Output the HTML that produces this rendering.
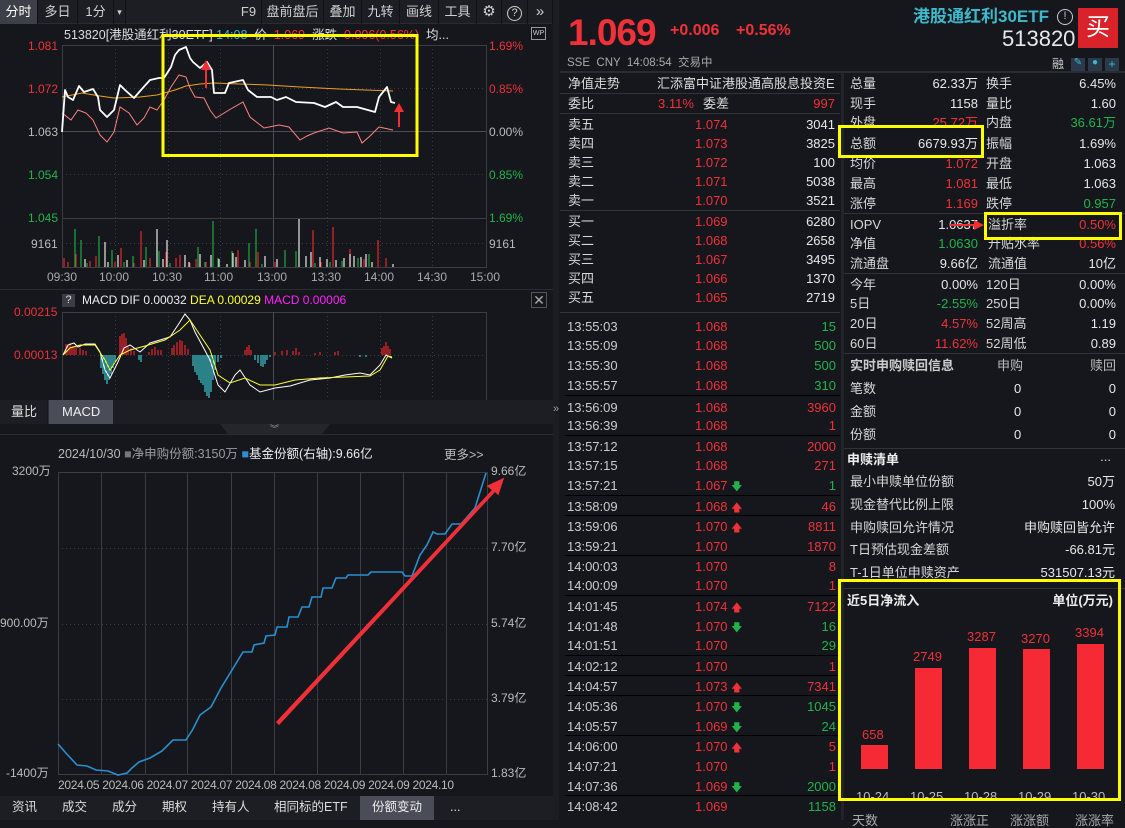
<!DOCTYPE html>
<html><head><meta charset="utf-8"><style>
*{margin:0;padding:0;box-sizing:border-box}
body{width:1125px;height:820px;background:#15171c;overflow:hidden;position:relative;font-family:"Liberation Sans","Noto Sans CJK SC",sans-serif;font-size:13px;color:#d8d8d8}
.a{position:absolute;white-space:nowrap;line-height:1}
.r{color:#f0313a}.g{color:#22b24c}.w{color:#e8e8e8}.c{color:#3cb9cc}.gy{color:#9a9ca2}
.hl{position:absolute;height:1px;background:#30333a}
.vl{position:absolute;width:1px;background:#30333a}
.tb{position:absolute;top:0;height:24px;line-height:24px;font-size:13px;color:#d0d0d0;text-align:center;border-right:1px solid #101114}
.yb{position:absolute;border:3px solid #ffff00}
</style></head><body>
<div style="position:absolute;left:0;top:0;width:553px;height:24px;background:#1c1e23;border-bottom:1px solid #2a2c32"></div>
<div class="tb" style="left:0;width:38px;background:#3d4048;color:#fff">分时</div>
<div class="tb" style="left:38px;width:40px">多日</div>
<div class="tb" style="left:78px;width:36px">1分</div>
<div class="tb" style="left:114px;width:12px;font-size:9px">▾</div>
<div class="tb" style="left:236px;width:26px">F9</div>
<div class="tb" style="left:262px;width:62px">盘前盘后</div>
<div class="tb" style="left:324px;width:38px">叠加</div>
<div class="tb" style="left:362px;width:38px">九转</div>
<div class="tb" style="left:400px;width:39px">画线</div>
<div class="tb" style="left:439px;width:38px">工具</div>
<div class="tb" style="left:477px;width:25px;font-size:15px">⚙</div>
<div class="tb" style="left:502px;width:26px"><span style="display:inline-block;width:15px;height:15px;border:1.5px solid #ccc;border-radius:50%;line-height:12px;font-size:11px">?</span></div>
<div class="tb" style="left:528px;width:25px;font-size:15px">»</div>
<div class="vl" style="left:553px;top:0;height:820px;width:6px;background:#1b1d22"></div>
<div class="a gy" style="left:553px;top:404px;font-size:11px">»</div>

<div class="a" style="left:64px;top:29px;font-size:12.5px;color:#ddd">513820[港股通红利30ETF] <span class="c">14:08</span> &nbsp;价 &nbsp;<span class="r">1.069</span> &nbsp;涨跌 &nbsp;<span class="r">0.006(0.56%)</span> &nbsp;均...</div>
<div class="a" style="left:531px;top:27px;width:15px;height:13px;border:1px solid #999;font-size:7px;color:#ccc;text-align:center;line-height:11px">WP</div>
<div class="a r" style="left:28px;top:40px;font-size:12px">1.081</div>
<div class="a r" style="left:28px;top:83px;font-size:12px">1.072</div>
<div class="a" style="left:28px;top:126px;font-size:12px;color:#bbb">1.063</div>
<div class="a g" style="left:28px;top:169px;font-size:12px">1.054</div>
<div class="a g" style="left:28px;top:212px;font-size:12px">1.045</div>
<div class="a" style="left:31px;top:238px;font-size:12px;color:#bbb">9161</div>
<div class="a r" style="left:489px;top:40px;font-size:12px">1.69%</div>
<div class="a r" style="left:489px;top:83px;font-size:12px">0.85%</div>
<div class="a" style="left:489px;top:126px;font-size:12px;color:#bbb">0.00%</div>
<div class="a g" style="left:489px;top:169px;font-size:12px">0.85%</div>
<div class="a g" style="left:489px;top:212px;font-size:12px">1.69%</div>
<div class="a" style="left:489px;top:238px;font-size:12px;color:#bbb">9161</div>
<div class="a" style="left:47px;top:271px;font-size:12px;color:#aaa">09:30</div>
<div class="a" style="left:99px;top:271px;font-size:12px;color:#aaa">10:00</div>
<div class="a" style="left:152px;top:271px;font-size:12px;color:#aaa">10:30</div>
<div class="a" style="left:204px;top:271px;font-size:12px;color:#aaa">11:00</div>
<div class="a" style="left:257px;top:271px;font-size:12px;color:#aaa">13:00</div>
<div class="a" style="left:311px;top:271px;font-size:12px;color:#aaa">13:30</div>
<div class="a" style="left:364px;top:271px;font-size:12px;color:#aaa">14:00</div>
<div class="a" style="left:417px;top:271px;font-size:12px;color:#aaa">14:30</div>
<div class="a" style="left:470px;top:271px;font-size:12px;color:#aaa">15:00</div>

<svg class="a" style="left:0;top:0" width="553" height="820">
<g stroke="#3a3d44" stroke-width="1" fill="none">
<rect x="62.5" y="45.5" width="424" height="222"/>
<line x1="62" y1="131.5" x2="486" y2="131.5" stroke="#4a4d55"/>
<line x1="273.5" y1="45" x2="273.5" y2="267" stroke="#4a4d55"/>
<g stroke-dasharray="1 3"><line x1="62" y1="88.5" x2="486" y2="88.5"/><line x1="62" y1="174.5" x2="486" y2="174.5"/><line x1="62" y1="243.5" x2="486" y2="243.5"/>
<line x1="115.5" y1="45" x2="115.5" y2="267"/><line x1="168.5" y1="45" x2="168.5" y2="267"/><line x1="220.5" y1="45" x2="220.5" y2="267"/><line x1="327.5" y1="45" x2="327.5" y2="267"/><line x1="380.5" y1="45" x2="380.5" y2="267"/><line x1="432.5" y1="45" x2="432.5" y2="267"/></g>
<line x1="62" y1="218.5" x2="486" y2="218.5"/>
</g>
<path d="M64 267V258M68 267V262M76 267V254M90 267V261M96 267V256M115 267V262M121 267V248M134 267V263M141 267V231M150 267V258M166 267V252M176 267V258M180 267V255M190 267V263M196 267V259M206 267V262M238 267V250M250 267V262M258 267V252M275 267V262M313 267V230M321 267V262M333 267V227M350 267V249M364 267V259M378 267V240M386 267V258" stroke="#e8262c" stroke-width="1.2"/>
<path d="M75 267V229M81 267V240M87 267V263M99 267V236M112 267V250M124 267V262M133 267V256M146 267V247M159 267V251M170 267V263M198 267V247M205 267V262M213 267V221M218 267V258M232 267V251M249 267V243M256 267V229M262 267V264M285 267V250M296 267V251M315 267V263M330 267V262M342 267V261M358 267V258M369 267V254" stroke="#1fa83f" stroke-width="1.2"/>
<path d="M85 267V259M105 267V242M108 267V262M118 267V255M127 267V260M144 267V260M157 267V229M163 267V259M167 267V240M185 267V255M189 267V262M200 267V254M211 267V255M219 267V259M227 267V264M233 267V253M236 267V257M245 267V260M265 267V256M277 267V259M299 267V219M306 267V256M311 267V252M320 267V257M327 267V259M336 267V260M344 267V258M350 267V254M354 267V256M361 267V257M366 267V254M372 267V262M393 267V264" stroke="#e8e8e8" stroke-width="1.2"/>
<polyline fill="none" stroke="#ff8080" stroke-width="1" points="62,113 71,120 78,110 86,113 93,120 100,135 107,142 114,132 120,107 129,113 137,125 144,118 150,107 157,110 164,100 171,87 179,75 186,77 190,88 195,97 204,98 210,110 216,118 229,110 243,102 250,117 264,128 279,125 289,127 300,140 307,136 314,133 329,128 343,133 357,132 362,143 370,136 379,127 393,130"/>
<polyline fill="none" stroke="#f0a020" stroke-width="1" points="62,97 82,93 100,96 114,98 140,97 157,95 175,90 186,86 200,84 214,83 240,84 268,85 300,87 339,89 393,91"/>
<polyline fill="none" stroke="#ffffff" stroke-width="1.8" stroke-linejoin="round" points="62,132 65,90 68,97 73,100 79,86 84,92 93,89 98,97 100,110 107,117 114,110 120,85 125,90 134,98 141,90 150,80 159,78 164,78 171,67 175,55 179,50 186,47 190,58 193,62 200,68 207,62 212,70 214,93 225,93 229,83 243,80 248,90 257,97 271,97 277,100 286,97 296,102 314,103 325,107 336,102 343,107 357,107 375,112 379,97 387,87 391,102 395,103"/>
<path d="M205 88L205 70L201 70L206 60L211 70L207 70L207 88Z" fill="#f03030"/>
<path d="M398 127L398 112L394 112L399 103L404 112L400 112L400 127Z" fill="#f03030"/>
<rect x="163" y="35.5" width="254" height="120" fill="none" stroke="#ffff00" stroke-width="3"/>
<line x1="0" y1="289.5" x2="553" y2="289.5" stroke="#2a2c33"/>
<g stroke="#3a3d44" fill="none"><rect x="62.5" y="312.5" width="424" height="90"/>
<line x1="273.5" y1="312" x2="273.5" y2="400" stroke="#4a4d55"/>
<g stroke-dasharray="1 3"><line x1="62" y1="355.5" x2="486" y2="355.5"/><line x1="115.5" y1="312" x2="115.5" y2="400"/><line x1="168.5" y1="312" x2="168.5" y2="400"/><line x1="220.5" y1="312" x2="220.5" y2="400"/><line x1="327.5" y1="312" x2="327.5" y2="400"/><line x1="380.5" y1="312" x2="380.5" y2="400"/><line x1="432.5" y1="312" x2="432.5" y2="400"/></g></g>
<path d="M66 355V344M68 355V345M70 355V343M72 355V346M74 355V347M76 355V346M80 355V348M83 355V350M86 355V351M120 355V336M122 355V334M124 355V333M126 355V338M128 355V346M131 355V348M134 355V351M149 355V352M152 355V349M155 355V347M158 355V350M161 355V350M172 355V348M174 355V345M177 355V342M180 355V340M182 355V341M185 355V345M188 355V349M245 355V350M247 355V347M249 355V345M251 355V350M275 355V352M282 355V351M287 355V350M293 355V351M296 355V348M299 355V352M315 355V353M320 355V352M335 355V352M338 355V351M382 355V348M384 355V346M386 355V342M388 355V346M390 355V349" stroke="#e8262c" stroke-width="1.2"/>
<path d="M101 355V368M103 355V374M105 355V380M107 355V384M109 355V380M111 355V374M113 355V368M115 355V362M139 355V360M141 355V362M193 355V366M195 355V372M197 355V375M199 355V380M201 355V383M203 355V385M205 355V392M207 355V396M209 355V398M211 355V392M213 355V380M215 355V370M218 355V362M221 355V358M255 355V360M258 355V363M261 355V366M263 355V367M265 355V364M267 355V360M270 355V357M360 355V357M366 355V357" stroke="#3cc8d0" stroke-width="1.2"/>
<polyline fill="none" stroke="#ffffff" stroke-width="1" points="63,355 68,345 74,343 78,347 85,344 95,344 100,352 105,370 110,378 118,362 124,348 130,345 140,352 150,343 160,340 170,337 178,325 185,314 190,320 195,332 202,345 210,360 218,385 225,392 235,375 240,370 250,385 260,392 275,388 290,386 310,380 330,378 345,375 360,373 370,375 380,365 386,355 392,358"/>
<polyline fill="none" stroke="#ffff30" stroke-width="1" points="63,355 70,348 80,345 95,345 105,360 110,370 120,355 130,350 145,346 165,340 180,330 190,320 200,335 210,350 218,375 230,383 245,378 260,385 275,385 295,380 320,378 345,377 370,376 380,370 388,356 392,357"/>
<rect x="0" y="400" width="553" height="24" fill="#1c1e23"/>
<rect x="48" y="400" width="65" height="24" fill="#4a4d57"/>
<line x1="48" y1="400" x2="48" y2="424" stroke="#101114"/>
<path d="M220 424H330L322 434H228Z" fill="#24262c"/>
<line x1="0" y1="434.5" x2="553" y2="434.5" stroke="#2a2c33"/>
<g stroke="#3a3d44" fill="none"><rect x="58.5" y="472.5" width="429" height="302"/>
<path d="M101.5 472V774M145.5 472V774M187.5 472V774M231.5 472V774M274.5 472V774M317.5 472V774M360.5 472V774M403.5 472V774M446.5 472V774"/>
<g stroke-dasharray="1 3"><line x1="58" y1="548.5" x2="487" y2="548.5"/><line x1="58" y1="624.5" x2="487" y2="624.5"/><line x1="58" y1="699.5" x2="487" y2="699.5"/></g></g>
<polyline fill="none" stroke="#2a8fd0" stroke-width="1.6" points="58,744 65,752 77,765 87,766 96,770 108,771 118,775 127,773 132,768 139,762 150,758 162,751 173,740 186,740 193,729 200,715 211,707 221,688 243,652 252,652 254,645 264,643 266,636 275,635 277,627 287,627 289,617 298,617 302,607 309,607 312,597 321,597 323,588 332,588 336,578 346,578 348,575 368,575 371,572 402,572 405,576 412,576 420,555 427,545 433,532 437,534 445,534 452,524 461,524 475,508 486,473"/>
<path d="M277 722L493 490L488 486L503 479L498 494L495 491L279 724Z" fill="#f03038" stroke="#f03038" stroke-width="1.5"/>
<rect x="0" y="796" width="553" height="24" fill="#1c1e23"/>
<rect x="360" y="796" width="74" height="24" fill="#4a4d57"/>
</svg>
<div class="a" style="left:62px;top:294px;width:13px;height:13px;background:#3a3d44;color:#ddd;font-size:11px;text-align:center;line-height:13px">?</div>
<div class="a" style="left:82px;top:294px;font-size:12px;color:#eee">MACD DIF 0.00032 <span style="color:#ffff30">DEA 0.00029</span> <span style="color:#ff20ff">MACD 0.00006</span></div>
<div class="a" style="left:531px;top:292px;width:16px;height:16px;border:1px solid #555;color:#aaa;font-size:14px;text-align:center;line-height:14px">✕</div>
<div class="a r" style="left:14px;top:306px;font-size:12px">0.00215</div>
<div class="a r" style="left:14px;top:349px;font-size:12px">0.00013</div>
<div class="a" style="left:11px;top:405px;font-size:13px;color:#ddd">量比</div>
<div class="a" style="left:62px;top:405px;font-size:13px;color:#eee">MACD</div>
<div class="a gy" style="left:270px;top:425px;font-size:9px">︾</div>
<div class="a" style="left:58px;top:448px;font-size:12.5px;color:#bbb">2024/10/30 <span style="color:#777">■</span><span class="gy">净申购份额:3150万</span> <span style="color:#2a8fd0">■</span><span style="color:#eee">基金份额(右轴):9.66亿</span></div>
<div class="a" style="left:444px;top:449px;font-size:12.5px;color:#bbb">更多&gt;&gt;</div>
<div class="a" style="left:12px;top:465px;font-size:12px;color:#bbb">3200万</div>
<div class="a" style="left:0;top:617px;font-size:12px;color:#bbb">900.00万</div>
<div class="a" style="left:6px;top:767px;font-size:12px;color:#bbb">-1400万</div>
<div class="a" style="left:491px;top:465px;font-size:12px;color:#bbb">9.66亿</div>
<div class="a" style="left:491px;top:541px;font-size:12px;color:#bbb">7.70亿</div>
<div class="a" style="left:491px;top:617px;font-size:12px;color:#bbb">5.74亿</div>
<div class="a" style="left:491px;top:692px;font-size:12px;color:#bbb">3.79亿</div>
<div class="a" style="left:491px;top:767px;font-size:12px;color:#bbb">1.83亿</div>
<div class="a" style="left:58px;top:779px;font-size:12px;color:#bbb;letter-spacing:-0.3px">2024.05 2024.06 2024.07 2024.07 2024.08 2024.08 2024.09 2024.09 2024.10</div>
<div class="a" style="left:12px;top:801px;font-size:12.5px;color:#ddd">资讯</div>
<div class="a" style="left:62px;top:801px;font-size:12.5px;color:#ddd">成交</div>
<div class="a" style="left:112px;top:801px;font-size:12.5px;color:#ddd">成分</div>
<div class="a" style="left:162px;top:801px;font-size:12.5px;color:#ddd">期权</div>
<div class="a" style="left:212px;top:801px;font-size:12.5px;color:#ddd">持有人</div>
<div class="a" style="left:274px;top:801px;font-size:12.5px;color:#ddd">相同标的ETF</div>
<div class="a" style="left:372px;top:801px;font-size:12.5px;color:#eee">份额变动</div>
<div class="a" style="left:450px;top:801px;font-size:12.5px;color:#ddd">...</div>

<div class="a" style="left:568px;top:14px;font-size:37px;font-weight:bold;color:#f0313a;letter-spacing:-1px">1.069</div>
<div class="a r" style="left:670px;top:23px;font-size:16px;font-weight:bold">+0.006</div>
<div class="a r" style="left:736px;top:23px;font-size:16px;font-weight:bold">+0.56%</div>
<div class="a c" style="left:913px;top:8px;font-size:17px;font-weight:bold">港股通红利30ETF</div>
<div class="a" style="left:1057px;top:9px;width:16px;height:16px;border:1.5px solid #ccc;border-radius:50%;font-size:11px;text-align:center;line-height:13px;color:#ccc">!</div>
<div class="a" style="left:1078px;top:8px;width:40px;height:40px;background:#d9222a;color:#fff;font-size:24px;text-align:center;line-height:40px">买</div>
<div class="a" style="left:1002px;top:28px;font-size:22px;color:#e8e8e8">513820</div>
<div class="a" style="left:567px;top:58px;font-size:11.5px;color:#aaa">SSE &nbsp;CNY &nbsp;14:08:54 &nbsp;交易中</div>
<div class="a" style="left:1052px;top:58px;font-size:12px;color:#ccc">融</div>
<div class="a" style="left:1071px;top:58px;width:14px;height:13px;background:#2a3a4a;color:#3cb9cc;font-size:10px;text-align:center">✎</div>
<div class="a" style="left:1088px;top:58px;width:14px;height:13px;background:#2a3a4a;color:#3cb9cc;font-size:10px;text-align:center">●</div>
<div class="a" style="left:1105px;top:58px;width:14px;height:13px;background:#2a3a4a;color:#3cb9cc;font-size:12px;text-align:center;line-height:12px">+</div>
<div class="hl" style="left:560px;top:71px;width:565px;height:2px;background:#2a2c33"></div>
<div class="vl" style="left:841px;top:73px;height:747px;width:3px;background:#22242a"></div>
<div class="a" style="left:568px;top:77px">净值走势</div><div class="a" style="left:657px;top:77px;color:#ddd">汇添富中证港股通高股息投资E</div>
<div class="hl" style="left:560px;top:93px;width:280px"></div>
<div class="a" style="left:568px;top:97px">委比</div><div class="a r" style="left:658px;top:97px">3.11%</div><div class="a" style="left:703px;top:97px">委差</div><div class="a r" style="right:290px;top:97px">997</div>
<div class="hl" style="left:560px;top:113px;width:280px"></div>
<div class="hl" style="left:560px;top:210px;width:280px"></div>
<div class="hl" style="left:560px;top:312px;width:280px"></div>
<div class="hl" style="left:844px;top:213px;width:281px"></div>
<div class="hl" style="left:844px;top:273px;width:281px"></div>
<div class="hl" style="left:844px;top:353px;width:281px"></div>
<div class="hl" style="left:844px;top:448px;width:281px"></div>
<div class="hl" style="left:844px;top:588px;width:281px"></div>
<div style="position:absolute;left:0;top:0;width:1125px;height:820px">
<div class="a" style="left:568px;top:118px">卖五</div><div class="a r" style="left:695px;top:118px">1.074</div><div class="a w" style="right:290px;top:118px">3041</div>
<div class="a" style="left:568px;top:137px">卖四</div><div class="a r" style="left:695px;top:137px">1.073</div><div class="a w" style="right:290px;top:137px">3825</div>
<div class="a" style="left:568px;top:156px">卖三</div><div class="a r" style="left:695px;top:156px">1.072</div><div class="a w" style="right:290px;top:156px">100</div>
<div class="a" style="left:568px;top:175px">卖二</div><div class="a r" style="left:695px;top:175px">1.071</div><div class="a w" style="right:290px;top:175px">5038</div>
<div class="a" style="left:568px;top:194px">卖一</div><div class="a r" style="left:695px;top:194px">1.070</div><div class="a w" style="right:290px;top:194px">3521</div>
<div class="a" style="left:568px;top:215px">买一</div><div class="a r" style="left:695px;top:215px">1.069</div><div class="a w" style="right:290px;top:215px">6280</div>
<div class="a" style="left:568px;top:234px">买二</div><div class="a r" style="left:695px;top:234px">1.068</div><div class="a w" style="right:290px;top:234px">2658</div>
<div class="a" style="left:568px;top:253px">买三</div><div class="a r" style="left:695px;top:253px">1.067</div><div class="a w" style="right:290px;top:253px">3495</div>
<div class="a" style="left:568px;top:272px">买四</div><div class="a r" style="left:695px;top:272px">1.066</div><div class="a w" style="right:290px;top:272px">1370</div>
<div class="a" style="left:568px;top:291px">买五</div><div class="a r" style="left:695px;top:291px">1.065</div><div class="a w" style="right:290px;top:291px">2719</div>
<div class="a" style="left:567px;top:320px;color:#ccc">13:55:03</div><div class="a r" style="left:695px;top:320px">1.068</div><div class="a g" style="right:289px;top:320px">15</div>
<div class="a" style="left:567px;top:339px;color:#ccc">13:55:09</div><div class="a r" style="left:695px;top:339px">1.068</div><div class="a g" style="right:289px;top:339px">500</div>
<div class="a" style="left:567px;top:359px;color:#ccc">13:55:30</div><div class="a r" style="left:695px;top:359px">1.068</div><div class="a g" style="right:289px;top:359px">500</div>
<div class="a" style="left:567px;top:379px;color:#ccc">13:55:57</div><div class="a r" style="left:695px;top:379px">1.068</div><div class="a g" style="right:289px;top:379px">310</div>
<div class="hl" style="left:565px;top:395px;width:275px;background:#000"></div>
<div class="a" style="left:567px;top:401px;color:#ccc">13:56:09</div><div class="a r" style="left:695px;top:401px">1.068</div><div class="a r" style="right:289px;top:401px">3960</div>
<div class="a" style="left:567px;top:419px;color:#ccc">13:56:39</div><div class="a r" style="left:695px;top:419px">1.068</div><div class="a r" style="right:289px;top:419px">1</div>
<div class="hl" style="left:565px;top:435px;width:275px;background:#000"></div>
<div class="a" style="left:567px;top:440px;color:#ccc">13:57:12</div><div class="a r" style="left:695px;top:440px">1.068</div><div class="a r" style="right:289px;top:440px">2000</div>
<div class="a" style="left:567px;top:459px;color:#ccc">13:57:15</div><div class="a r" style="left:695px;top:459px">1.068</div><div class="a r" style="right:289px;top:459px">271</div>
<div class="a" style="left:567px;top:479px;color:#ccc">13:57:21</div><div class="a r" style="left:695px;top:479px">1.067 <span class="g" style="font-size:11px">🡇</span></div><div class="a g" style="right:289px;top:479px">1</div>
<div class="hl" style="left:565px;top:495px;width:275px;background:#000"></div>
<div class="a" style="left:567px;top:500px;color:#ccc">13:58:09</div><div class="a r" style="left:695px;top:500px">1.068 <span style="font-size:11px">🡅</span></div><div class="a r" style="right:289px;top:500px">46</div>
<div class="hl" style="left:565px;top:515px;width:275px;background:#000"></div>
<div class="a" style="left:567px;top:520px;color:#ccc">13:59:06</div><div class="a r" style="left:695px;top:520px">1.070 <span style="font-size:11px">🡅</span></div><div class="a r" style="right:289px;top:520px">8811</div>
<div class="a" style="left:567px;top:540px;color:#ccc">13:59:21</div><div class="a r" style="left:695px;top:540px">1.070</div><div class="a r" style="right:289px;top:540px">1870</div>
<div class="hl" style="left:565px;top:555px;width:275px;background:#000"></div>
<div class="a" style="left:567px;top:560px;color:#ccc">14:00:03</div><div class="a r" style="left:695px;top:560px">1.070</div><div class="a r" style="right:289px;top:560px">8</div>
<div class="a" style="left:567px;top:579px;color:#ccc">14:00:09</div><div class="a r" style="left:695px;top:579px">1.070</div><div class="a r" style="right:289px;top:579px">1</div>
<div class="hl" style="left:565px;top:595px;width:275px;background:#000"></div>
<div class="a" style="left:567px;top:600px;color:#ccc">14:01:45</div><div class="a r" style="left:695px;top:600px">1.074 <span style="font-size:11px">🡅</span></div><div class="a r" style="right:289px;top:600px">7122</div>
<div class="a" style="left:567px;top:620px;color:#ccc">14:01:48</div><div class="a r" style="left:695px;top:620px">1.070 <span class="g" style="font-size:11px">🡇</span></div><div class="a g" style="right:289px;top:620px">16</div>
<div class="a" style="left:567px;top:639px;color:#ccc">14:01:51</div><div class="a r" style="left:695px;top:639px">1.070</div><div class="a g" style="right:289px;top:639px">29</div>
<div class="hl" style="left:565px;top:655px;width:275px;background:#000"></div>
<div class="a" style="left:567px;top:660px;color:#ccc">14:02:12</div><div class="a r" style="left:695px;top:660px">1.070</div><div class="a r" style="right:289px;top:660px">1</div>
<div class="hl" style="left:565px;top:675px;width:275px;background:#000"></div>
<div class="a" style="left:567px;top:680px;color:#ccc">14:04:57</div><div class="a r" style="left:695px;top:680px">1.073 <span style="font-size:11px">🡅</span></div><div class="a r" style="right:289px;top:680px">7341</div>
<div class="hl" style="left:565px;top:695px;width:275px;background:#000"></div>
<div class="a" style="left:567px;top:700px;color:#ccc">14:05:36</div><div class="a r" style="left:695px;top:700px">1.070 <span class="g" style="font-size:11px">🡇</span></div><div class="a g" style="right:289px;top:700px">1045</div>
<div class="a" style="left:567px;top:720px;color:#ccc">14:05:57</div><div class="a r" style="left:695px;top:720px">1.069 <span class="g" style="font-size:11px">🡇</span></div><div class="a g" style="right:289px;top:720px">24</div>
<div class="hl" style="left:565px;top:735px;width:275px;background:#000"></div>
<div class="a" style="left:567px;top:740px;color:#ccc">14:06:00</div><div class="a r" style="left:695px;top:740px">1.070 <span style="font-size:11px">🡅</span></div><div class="a r" style="right:289px;top:740px">5</div>
<div class="a" style="left:567px;top:760px;color:#ccc">14:07:21</div><div class="a r" style="left:695px;top:760px">1.070</div><div class="a r" style="right:289px;top:760px">1</div>
<div class="a" style="left:567px;top:780px;color:#ccc">14:07:36</div><div class="a r" style="left:695px;top:780px">1.069 <span class="g" style="font-size:11px">🡇</span></div><div class="a g" style="right:289px;top:780px">2000</div>
<div class="hl" style="left:565px;top:795px;width:275px;background:#000"></div>
<div class="a" style="left:567px;top:800px;color:#ccc">14:08:42</div><div class="a r" style="left:695px;top:800px">1.069</div><div class="a g" style="right:289px;top:800px">1158</div>
<div class="a" style="left:850px;top:77px">总量</div><div class="a w" style="right:147px;top:77px">62.33万</div><div class="a" style="left:986px;top:77px">换手</div><div class="a w" style="right:9px;top:77px">6.45%</div>
<div class="a" style="left:850px;top:97px">现手</div><div class="a w" style="right:147px;top:97px">1158</div><div class="a" style="left:986px;top:97px">量比</div><div class="a w" style="right:9px;top:97px">1.60</div>
<div class="a" style="left:850px;top:116px">外盘</div><div class="a r" style="right:147px;top:116px">25.72万</div><div class="a" style="left:986px;top:116px">内盘</div><div class="a g" style="right:9px;top:116px">36.61万</div>
<div class="a" style="left:850px;top:137px">总额</div><div class="a w" style="right:147px;top:137px">6679.93万</div><div class="a" style="left:986px;top:137px">振幅</div><div class="a w" style="right:9px;top:137px">1.69%</div>
<div class="a" style="left:850px;top:157px">均价</div><div class="a r" style="right:147px;top:157px">1.072</div><div class="a" style="left:986px;top:157px">开盘</div><div class="a w" style="right:9px;top:157px">1.063</div>
<div class="a" style="left:850px;top:177px">最高</div><div class="a r" style="right:147px;top:177px">1.081</div><div class="a" style="left:986px;top:177px">最低</div><div class="a w" style="right:9px;top:177px">1.063</div>
<div class="a" style="left:850px;top:197px">涨停</div><div class="a r" style="right:147px;top:197px">1.169</div><div class="a" style="left:986px;top:197px">跌停</div><div class="a g" style="right:9px;top:197px">0.957</div>
<div class="a" style="left:850px;top:218px">IOPV</div><div class="a w" style="right:147px;top:218px">1.0637</div><div class="a" style="left:988px;top:218px">溢折率</div><div class="a r" style="right:9px;top:218px">0.50%</div>
<div class="a" style="left:850px;top:237px">净值</div><div class="a g" style="right:147px;top:237px">1.0630</div><div class="a" style="left:988px;top:237px">升贴水率</div><div class="a r" style="right:9px;top:237px">0.56%</div>
<div class="a" style="left:850px;top:257px">流通盘</div><div class="a w" style="right:147px;top:257px">9.66亿</div><div class="a" style="left:988px;top:257px">流通值</div><div class="a w" style="right:9px;top:257px">10亿</div>
<div class="a" style="left:850px;top:278px">今年</div><div class="a w" style="right:147px;top:278px">0.00%</div><div class="a" style="left:986px;top:278px">120日</div><div class="a w" style="right:9px;top:278px">0.00%</div>
<div class="a" style="left:850px;top:297px">5日</div><div class="a g" style="right:147px;top:297px">-2.55%</div><div class="a" style="left:986px;top:297px">250日</div><div class="a w" style="right:9px;top:297px">0.00%</div>
<div class="a" style="left:850px;top:317px">20日</div><div class="a r" style="right:147px;top:317px">4.57%</div><div class="a" style="left:986px;top:317px">52周高</div><div class="a w" style="right:9px;top:317px">1.19</div>
<div class="a" style="left:850px;top:337px">60日</div><div class="a r" style="right:147px;top:337px">11.62%</div><div class="a" style="left:986px;top:337px">52周低</div><div class="a w" style="right:9px;top:337px">0.89</div>
<div class="a" style="left:850px;top:359px;font-weight:bold;color:#ccc">实时申购赎回信息</div><div class="a" style="left:997px;top:359px;color:#bbb">申购</div><div class="a" style="right:9px;top:359px;color:#bbb">赎回</div>
<div class="a" style="left:850px;top:382px">笔数</div><div class="a w" style="left:1014px;top:382px">0</div><div class="a w" style="right:9px;top:382px">0</div>
<div class="a" style="left:850px;top:405px">金额</div><div class="a w" style="left:1014px;top:405px">0</div><div class="a w" style="right:9px;top:405px">0</div>
<div class="a" style="left:850px;top:428px">份额</div><div class="a w" style="left:1014px;top:428px">0</div><div class="a w" style="right:9px;top:428px">0</div>
<div class="a" style="left:847px;top:453px;font-weight:bold;color:#eee">申赎清单</div><div class="a" style="right:14px;top:450px;color:#ccc">...</div>
<div class="a" style="left:850px;top:475px">最小申赎单位份额</div><div class="a w" style="right:10px;top:475px">50万</div>
<div class="a" style="left:850px;top:498px">现金替代比例上限</div><div class="a w" style="right:10px;top:498px">100%</div>
<div class="a" style="left:850px;top:521px">申购赎回允许情况</div><div class="a w" style="right:10px;top:521px">申购赎回皆允许</div>
<div class="a" style="left:850px;top:543px">T日预估现金差额</div><div class="a w" style="right:10px;top:543px">-66.81元</div>
<div class="a" style="left:850px;top:566px">T-1日单位申赎资产</div><div class="a w" style="right:10px;top:566px">531507.13元</div>
<div class="a" style="left:847px;top:594px;font-weight:bold;color:#eee">近5日净流入</div><div class="a" style="right:12px;top:594px;font-weight:bold;color:#eee">单位(万元)</div>
<div style="position:absolute;left:861px;top:745px;width:27px;height:24px;background:#f52a35"></div>
<div style="position:absolute;left:915px;top:668px;width:27px;height:101px;background:#f52a35"></div>
<div style="position:absolute;left:969px;top:648px;width:27px;height:121px;background:#f52a35"></div>
<div style="position:absolute;left:1023px;top:649px;width:27px;height:120px;background:#f52a35"></div>
<div style="position:absolute;left:1077px;top:644px;width:27px;height:125px;background:#f52a35"></div>
<div class="a r" style="left:862px;top:728px">658</div>
<div class="a r" style="left:913px;top:650px">2749</div>
<div class="a r" style="left:967px;top:630px">3287</div>
<div class="a r" style="left:1021px;top:632px">3270</div>
<div class="a r" style="left:1075px;top:626px">3394</div>
<div class="a" style="left:856px;top:790px;color:#bbb">10-24</div>
<div class="a" style="left:910px;top:790px;color:#bbb">10-25</div>
<div class="a" style="left:964px;top:790px;color:#bbb">10-28</div>
<div class="a" style="left:1018px;top:790px;color:#bbb">10-29</div>
<div class="a" style="left:1072px;top:790px;color:#bbb">10-30</div>
<div class="a" style="left:852px;top:814px;color:#aaa">天数</div><div class="a" style="left:950px;top:814px;color:#aaa">涨涨正</div><div class="a" style="left:1010px;top:814px;color:#aaa">涨涨额</div><div class="a" style="left:1075px;top:814px;color:#aaa">涨涨率</div>
</div>
<div class="yb" style="left:838px;top:125px;width:146px;height:33px"></div>
<div class="yb" style="left:984px;top:212px;width:138px;height:28px"></div>
<div class="yb" style="left:838px;top:579px;width:283px;height:222px"></div>
<svg class="a" style="left:950px;top:218px" width="36" height="14"><path d="M0 6H24V2L34 7L24 12V8H0Z" fill="#f03030"/></svg>
</body></html>
